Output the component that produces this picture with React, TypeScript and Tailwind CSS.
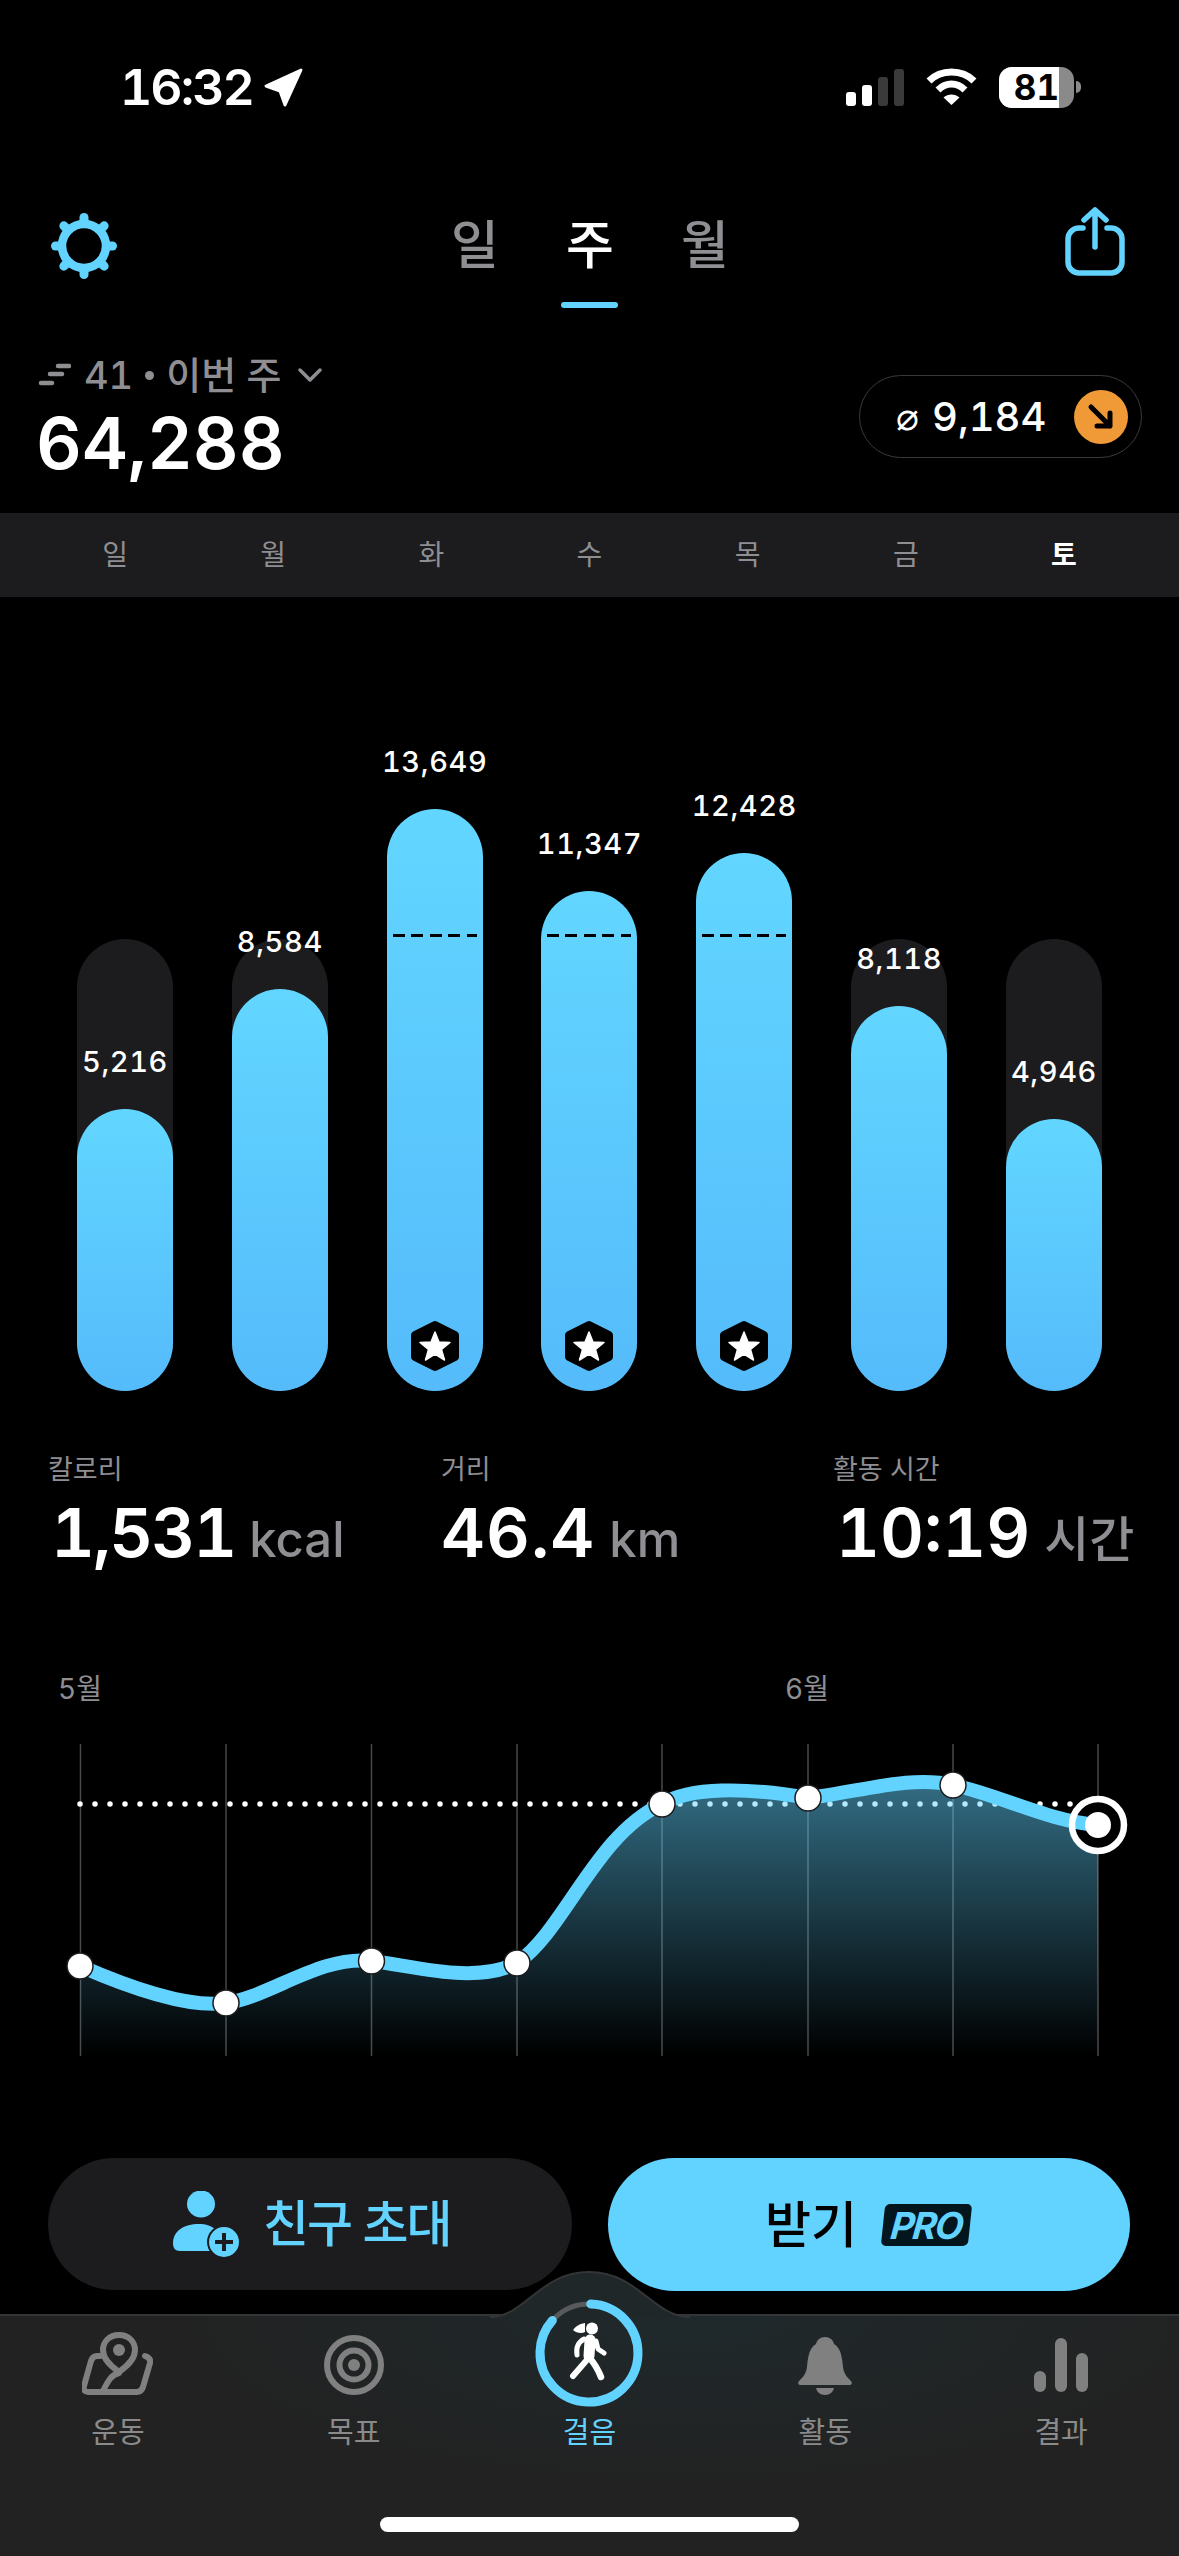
const CYAN = "#62d3ff";

const days = ["일", "월", "화", "수", "목", "금", "토"];

const bars = [
  { label: "5,216", fill: 282, goal: false },
  { label: "8,584", fill: 402, goal: false },
  { label: "13,649", fill: 582, goal: true },
  { label: "11,347", fill: 500, goal: true },
  { label: "12,428", fill: 538, goal: true },
  { label: "8,118", fill: 385, goal: false },
  { label: "4,946", fill: 272, goal: false },
];

const gridX = [80.5, 226, 371.5, 517, 662, 808, 953];
const points = [
  [80, 1966],
  [226, 2003],
  [371.5, 1961],
  [517, 1963],
  [662, 1804],
  [808, 1798],
  [953, 1785],
];
const curve =
  "M80 1966 C135 1990 190 2008 226 2003 C270 1997 320 1955 371.5 1961 C410 1965 475 1985 517 1963 C565 1930 595 1835 662 1804 C690 1787 745 1787 808 1798 C860 1792 910 1775 953 1785 C1000 1795 1050 1822 1098 1825";

const StatusBar = () => (
  <div className="h-[174px] flex items-center justify-between pl-[120px] pr-[98px]">
    <div className="flex items-center gap-[11px]">
      <span className="text-[50px] leading-none font-semibold tracking-[-2px]">16:32</span>
      <svg width="40" height="40" viewBox="265 68 40 40">
        <path d="M302 71 L267 87 L281 92 L286 106 Z" fill="#fff" stroke="#fff" strokeWidth="3" strokeLinejoin="round" />
      </svg>
    </div>
    <div className="flex items-center">
      <div className="flex items-end gap-[6px] h-[37px]">
        <div className="w-[10px] h-[14px] rounded-[3px] bg-white" />
        <div className="w-[10px] h-[21px] rounded-[3px] bg-white" />
        <div className="w-[10px] h-[29px] rounded-[3px] bg-[#3a3a3a]" />
        <div className="w-[10px] h-[37px] rounded-[3px] bg-[#3a3a3a]" />
      </div>
      <svg className="ml-[22px]" width="51" height="38" viewBox="0 0 51 38" fill="none" stroke="#fff" strokeWidth="7">
        <path d="M3 13 C15 1 36 1 48 13" />
        <path d="M12 22 C20 14 31 14 39 22" />
        <path d="M25.5 37 L17.5 29.5 C22 25.5 29 25.5 33.5 29.5 Z" fill="#fff" stroke="none" />
      </svg>
      <div className="ml-[22px] relative w-[75px] h-[41px] rounded-[13px] overflow-hidden bg-[#8a8a8a]">
        <div className="w-[60px] h-full bg-white" />
        <span className="absolute inset-0 flex items-center justify-center text-[35px] font-bold text-black leading-none">81</span>
      </div>
      <div className="ml-[2px] w-[5px] h-[12px] rounded-r-full bg-[#8a8a8a]" />
    </div>
  </div>
);

const Gear = () => (
  <svg width="66" height="66" viewBox="-33 -33 66 66" fill="none" stroke={CYAN}>
    <circle r="22" strokeWidth="8.5" />
    {[0, 45, 90, 135, 180, 225, 270, 315].map((a) => (
      <line key={a} x1="0" y1="-24" x2="0" y2="-28.5" strokeWidth="9" strokeLinecap="round" transform={`rotate(${a})`} />
    ))}
  </svg>
);

const Header = () => (
  <div className="h-[144px] flex items-center justify-between pl-[51px] pr-[54px]">
    <Gear />
    <div className="relative left-[2px] flex text-[52px] leading-none font-medium text-[#8e8e93]">
      <span className="w-[115px] text-center">일</span>
      <span className="w-[115px] text-center text-white">주</span>
      <span className="w-[115px] text-center">월</span>
      <div className="absolute left-[143px] top-[82px] w-[57px] h-[6px] rounded-full bg-[#62d3ff]" />
    </div>
    <div className="w-[66px] mb-[8px] flex justify-end">
      <svg width="60" height="70" viewBox="1065 207 60 70" fill="none" stroke={CYAN} strokeWidth="5.5" strokeLinecap="round" strokeLinejoin="round">
        <path d="M1083 228 H1079 A11 11 0 0 0 1068 239 V262 A11 11 0 0 0 1079 273 H1111 A11 11 0 0 0 1122 262 V239 A11 11 0 0 0 1111 228 H1107" />
        <path d="M1095 247 V210 M1084 220 L1095 210 L1106 220" />
      </svg>
    </div>
  </div>
);

const Summary = () => (
  <div className="h-[195px] flex items-start justify-between pl-[38px] pr-[37px] pt-[35px]">
    <div className="flex flex-col gap-[4px]">
      <div className="flex items-center h-[44px] text-[38px] leading-none font-medium text-[#8e8e93]">
        <svg width="33" height="24" viewBox="0 0 33 24" fill="none" stroke="#8e8e93" strokeWidth="4.5" strokeLinecap="round">
          <path d="M20 3 H31" />
          <path d="M12 11 H24" />
          <path d="M3 20 H14" />
        </svg>
        <span className="ml-[13px]">41</span>
        <div className="mx-[12px] w-[9px] h-[9px] rounded-full bg-[#8e8e93]" />
        <span>이번 주</span>
        <svg className="ml-[17px]" width="24" height="14" viewBox="0 0 24 14" fill="none" stroke="#8e8e93" strokeWidth="3.5" strokeLinecap="round" strokeLinejoin="round">
          <path d="M2 2 L12 12 L22 2" />
        </svg>
      </div>
      <div className="-ml-[2px] text-[71px] leading-[84px] font-semibold">64,288</div>
    </div>
    <div className="mt-[22px] w-[283px] h-[83px] rounded-full border border-[#3a3a3c] flex items-center pl-[36px] pr-[13px] justify-between">
      <div className="flex items-center gap-[13px]">
        <span className="text-[38px] leading-none font-light" style={{ fontFamily: '"DejaVu Sans", sans-serif' }}>⌀</span>
        <span className="text-[40px] leading-none font-medium tabular-nums">9,184</span>
      </div>
      <div className="w-[54px] h-[54px] rounded-full bg-[#f09a37] flex items-center justify-center">
        <svg width="30" height="30" viewBox="0 0 30 30" fill="none" stroke="#000" strokeWidth="5" strokeLinecap="round" strokeLinejoin="round">
          <path d="M5 5 L24 24 M24 11 V24 H11" />
        </svg>
      </div>
    </div>
  </div>
);

const Badge = () => (
  <svg className="absolute left-[23px] bottom-[19px]" width="50" height="52" viewBox="0 0 50 52">
    <path d="M25 5 L45 15 V37 L25 47 L5 37 V15 Z" fill="#000" stroke="#000" strokeWidth="8" strokeLinejoin="round" />
    <path d="M25 12 L29 22 L40 22.5 L31.5 29.5 L34.5 40 L25 34 L15.5 40 L18.5 29.5 L10 22.5 L21 22 Z" fill="#fff" stroke="#fff" strokeWidth="1.5" strokeLinejoin="round" />
  </svg>
);

const BarChart = () => (
  <div className="h-[794px] flex items-end justify-between px-[77px]">
    {bars.map((bar) => (
      <div key={bar.label} className="relative w-[96px] flex flex-col items-center">
        <div className="absolute bottom-0 inset-x-0 h-[452px] rounded-full bg-[#1c1c1e]" />
        <span className="relative mb-[29px] text-[29px] leading-[36px] font-medium tracking-[0.6px] whitespace-nowrap tabular-nums">{bar.label}</span>
        <div
          className="relative w-full rounded-full bg-gradient-to-b from-[#62d6ff] to-[#55bbfb]"
          style={{ height: bar.fill }}
        >
          {bar.goal && (
            <>
              <div className="absolute inset-x-[6px] bottom-[454px] h-[3px] bg-[repeating-linear-gradient(90deg,#000_0_12px,transparent_12px_18.5px)]" />
              <Badge />
            </>
          )}
        </div>
      </div>
    ))}
  </div>
);

const Stat = ({ label, value, unit, className, valueClass }: { label: string; value: string; unit: string; className: string; valueClass: string }) => (
  <div className={className}>
    <div className="text-[27px] leading-[36px] text-[#8e8e93]">{label}</div>
    <div className="mt-[6px] h-[76px] flex items-baseline gap-[14px] leading-[76px] whitespace-nowrap">
      <span className={`text-[68px] font-semibold tabular-nums ${valueClass}`}>{value}</span>
      <span className="text-[49px] font-medium text-[#8e8e93]">{unit}</span>
    </div>
  </div>
);

const Stats = () => (
  <div className="flex pl-[48px] pt-[61px]">
    <Stat className="w-[393px]" valueClass="ml-[3px] tracking-[-2px]" label="칼로리" value="1,531" unit="kcal" />
    <Stat className="w-[392px]" valueClass="tracking-[1px]" label="거리" value="46.4" unit="km" />
    <Stat className="w-[290px]" valueClass="ml-[3px]" label="활동 시간" value="10:19" unit="시간" />
  </div>
);

const LineChart = () => (
  <div>
    <div className="mt-[101px] flex text-[28px] leading-[36px] text-[#8e8e93]">
      <span className="ml-[58px] w-[727px]">5월</span>
      <span>6월</span>
    </div>
    <svg className="mt-[23px] block" width="1179" height="340" viewBox="0 1730 1179 340" fill="none">
      <defs>
        <linearGradient id="area" x1="0" y1="1790" x2="0" y2="2056" gradientUnits="userSpaceOnUse">
          <stop offset="0" stopColor={CYAN} stopOpacity="0.5" />
          <stop offset="1" stopColor={CYAN} stopOpacity="0" />
        </linearGradient>
      </defs>
      {[...gridX, 1098].map((x) => (
        <line key={x} x1={x} y1="1744" x2={x} y2="2056" stroke="#48484a" strokeWidth="1.5" />
      ))}
      <line x1="80" y1="1804" x2="1075" y2="1804" stroke="#fff" strokeWidth="5.5" strokeLinecap="round" strokeDasharray="0 15" />
      <path d={`${curve} V2056 H80 Z`} fill="url(#area)" />
      <circle cx="1098" cy="1825" r="26" fill="#000" />
      <path d={curve} stroke={CYAN} strokeWidth="14" strokeLinecap="round" />
      {points.map(([x, y]) => (
        <circle key={x} cx={x} cy={y} r="13" fill="#fff" stroke="#1c1c1e" strokeWidth="1.5" />
      ))}
      <circle cx="1098" cy="1825" r="26" stroke="#fff" strokeWidth="6.5" />
      <circle cx="1098" cy="1825" r="13" fill="#fff" />
    </svg>
  </div>
);

const Buttons = () => (
  <div className="mt-[88px] flex gap-[36px] pl-[48px] pr-[49px]">
    <div className="w-[524px] h-[132px] rounded-full bg-[#1c1c1e] flex items-center pl-[125px] gap-[23px]">
      <svg width="67" height="67" viewBox="173 2194 67 67">
        <ellipse cx="201" cy="2207" rx="14" ry="13.5" fill={CYAN} />
        <path d="M173 2246 C173 2234 184 2227 199 2227 C213 2227 222 2234 222 2254 H180 C175 2254 173 2251 173 2246 Z" fill={CYAN} />
        <circle cx="224" cy="2245" r="17" fill="#1c1c1e" />
        <circle cx="224" cy="2245" r="15" fill={CYAN} />
        <path d="M224 2236 V2254 M215 2245 H233" stroke="#1c1c1e" strokeWidth="4" />
      </svg>
      <span className="text-[50px] leading-none font-medium tracking-[-2px] text-[#62d3ff]">친구 초대</span>
    </div>
    <div className="w-[522px] h-[133px] rounded-full bg-[#62d3ff] flex items-center justify-center gap-[26px] pr-[3px]">
      <span className="text-[50px] leading-none font-medium text-black">받기</span>
      <div className="w-[87px] h-[42px] rounded-[5px] bg-[#04161d] -skew-x-6 flex items-center justify-center">
        <span className="text-[37px] leading-none font-bold italic text-[#62d3ff] tracking-[-2px]">PRO</span>
      </div>
    </div>
  </div>
);

const ICON = "#808080";

const tabs = [
  {
    label: "운동",
    icon: (
      <svg className="mb-[20px] shrink-0" width="71" height="63" viewBox="83 2331 71 63" fill="none" stroke={ICON} strokeWidth="6" strokeLinecap="round" strokeLinejoin="round">
        <path d="M120 2334 C110 2334 104 2341 104 2349 C104 2359 113 2366 120 2371 C127 2366 136 2359 136 2349 C136 2341 130 2334 120 2334 Z" />
        <circle cx="120" cy="2349" r="6" fill={ICON} stroke="none" />
        <path d="M101 2355 H98 C95 2355 93 2357 92 2360 L85 2385 C84 2389 86 2391 89 2391 H138 C141 2391 143 2389 144 2386 L151 2362 C152 2358 149 2356 146 2355" />
        <path d="M120 2372 C112 2374 109 2380 104 2390" />
      </svg>
    ),
  },
  {
    label: "목표",
    icon: (
      <svg className="mb-[20px] shrink-0" width="60" height="60" viewBox="324 2334 60 60" fill="none" stroke={ICON} strokeWidth="6">
        <circle cx="354" cy="2364" r="27" />
        <circle cx="354" cy="2364" r="14.5" />
        <circle cx="354" cy="2364" r="6" fill={ICON} stroke="none" />
      </svg>
    ),
  },
  {
    label: "걸음",
    active: true,
    icon: (
      <svg className="mb-[5px] shrink-0" width="114" height="114" viewBox="532 2295 114 114" fill="none" strokeLinecap="round">
        <circle cx="589" cy="2352" r="49" stroke="#58595b" strokeWidth="5" />
        <circle
          cx="589"
          cy="2352"
          r="49"
          stroke={CYAN}
          strokeWidth="9"
          pathLength={100}
          strokeDasharray="86 100"
          transform="rotate(-88 589 2352)"
        />
        <ellipse cx="592" cy="2327.5" rx="6" ry="6" fill="#fff" />
        <path d="M585 2322 C579 2323 575 2326 573 2329 C576 2332 582 2333 585 2331 Z" fill="#fff" />
        <path d="M590 2339 L589 2355" stroke="#fff" strokeWidth="11" />
        <path d="M584 2338 C577 2342 576 2348 577 2354" stroke="#fff" strokeWidth="5" />
        <path d="M596 2340 L598 2348 L604 2352" stroke="#fff" strokeWidth="5" strokeLinejoin="round" />
        <path d="M586 2360 L573 2375" stroke="#fff" strokeWidth="6" />
        <path d="M589 2356 C594 2362 598 2368 601 2376" stroke="#fff" strokeWidth="6.5" />
      </svg>
    ),
  },
  {
    label: "활동",
    icon: (
      <svg className="mb-[20px] shrink-0" width="54" height="58" viewBox="796 2336 54 58" fill={ICON}>
        <path d="M823 2336 C818 2336 815 2339 814 2343 C807 2347 806 2356 805 2366 C804 2373 801 2376 798 2379 C795 2382 796 2384 799 2384 H847 C850 2384 851 2382 848 2379 C845 2376 842 2373 841 2366 C840 2356 839 2347 832 2343 C831 2339 828 2336 823 2336 Z" />
        <path d="M814 2387 H832 C831 2391 828 2394 823 2394 C818 2394 815 2391 814 2387 Z" />
      </svg>
    ),
  },
  {
    label: "결과",
    icon: (
      <div className="mb-[23px] flex items-end gap-[9px]">
        <div className="w-[12px] h-[21px] rounded-full bg-[#808080]" />
        <div className="w-[12px] h-[54px] rounded-full bg-[#808080]" />
        <div className="w-[12px] h-[39px] rounded-full bg-[#808080]" />
      </div>
    ),
  },
];

const TabBar = () => (
  <div className="relative mt-[23px] h-[242px] border-t-2 border-[#333536] bg-[radial-gradient(ellipse_520px_170px_at_690px_0px,#1f292c,#222222)]">
    <svg className="absolute left-[480px] -top-[45px]" width="220" height="48" viewBox="480 2269 220 48">
      <path d="M490 2316 C525 2316 540 2270 589 2270 C638 2270 653 2316 690 2316 Z" fill="#1f2729" />
      <path d="M490 2315 C525 2315 540 2270 589 2270 C638 2270 653 2315 690 2315" fill="none" stroke="#333536" strokeWidth="2" />
    </svg>
    <div className="relative grid grid-cols-5">
      {tabs.map((tab) => (
        <div key={tab.label} className="flex flex-col items-center">
          <div className="h-[99px] flex flex-col justify-end">{tab.icon}</div>
          <span className={`text-[29px] leading-[36px] ${tab.active ? "text-[#62d3ff]" : "text-[#8a8a8a]"}`}>{tab.label}</span>
        </div>
      ))}
    </div>
    <div className="absolute left-[380px] top-[201px] w-[419px] h-[15px] rounded-full bg-white" />
  </div>
);

export default function App() {
  return (
    <div
      className="w-[1179px] h-[2556px] overflow-hidden bg-black text-white tabular-nums"
      style={{ fontFamily: 'Inter, "Noto Sans CJK KR", sans-serif' }}
    >
      <StatusBar />
      <Header />
      <Summary />
      <div className="h-[84px] grid grid-cols-7 items-center px-[36px] bg-[#1c1c1e] text-[28px] text-center text-[#8e8e93]">
        {days.map((day, i) => (
          <span key={i} className={i === 6 ? "text-white font-semibold" : ""}>
            {day}
          </span>
        ))}
      </div>
      <BarChart />
      <Stats />
      <LineChart />
      <Buttons />
      <TabBar />
    </div>
  );
}
